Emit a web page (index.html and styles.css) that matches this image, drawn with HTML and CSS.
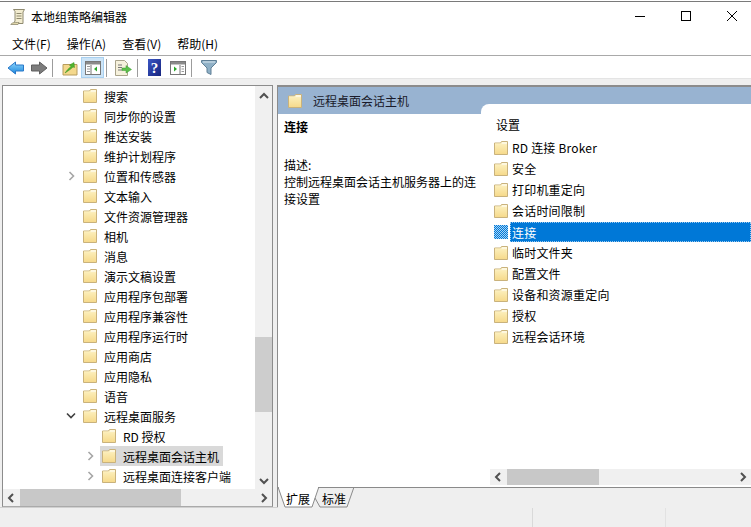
FILE: index.html
```html
<!DOCTYPE html>
<html lang="zh">
<head>
<meta charset="utf-8">
<title>本地组策略编辑器</title>
<link rel="stylesheet" href="styles.css">
</head>
<body>
<svg class="defs" width="0" height="0">
  <defs>
    <linearGradient id="fg" x1="0" y1="0" x2="0" y2="1"><stop offset="0" stop-color="#fdf3c4"/><stop offset="1" stop-color="#f6d98a"/></linearGradient>
    <symbol id="folder" viewBox="0 0 14 14">
      <path d="M.5 2V13.500H13.500V.5H7.500L6.500 2Z" fill="url(#fg)" stroke="#c9b27c"/>
      <path d="M8 1.500H13V3H7.500Z" fill="#fff"/>
      <path d="M1 3H13" stroke="#fbeebd"/>
    </symbol>
    <symbol id="chev-r" viewBox="0 0 8 10"><path d="M1.500 1 5.500 5 1.500 9" fill="none" stroke="#a6a6a6" stroke-width="1.600"/></symbol>
    <symbol id="chev-d" viewBox="0 0 10 8"><path d="M1 1.500 5 5.500 9 1.500" fill="none" stroke="#404040" stroke-width="1.600"/></symbol>
    <symbol id="sb-l" viewBox="0 0 8 10"><path d="M6 1 2 5 6 9" fill="none" stroke="#505050" stroke-width="2"/></symbol>
    <symbol id="sb-r" viewBox="0 0 8 10"><path d="M2 1 6 5 2 9" fill="none" stroke="#505050" stroke-width="2"/></symbol>
    <symbol id="sb-u" viewBox="0 0 10 8"><path d="M1 6 5 2 9 6" fill="none" stroke="#505050" stroke-width="2"/></symbol>
    <symbol id="sb-d" viewBox="0 0 10 8"><path d="M1 2 5 6 9 2" fill="none" stroke="#505050" stroke-width="2"/></symbol>
  </defs>
</svg>
<div class="window">
  <header class="titlebar">
    <svg class="app-icon" width="16" height="18" viewBox="0 0 16 18"><path d="M3.500 1.500H14.500L13 4V15.500H3.500L5 13V3.500Z" fill="#f2ecd0" stroke="#8f8a70"/><path d="M.8 16.500C2 14.500 4 14.500 9 14.500L8 16.500Z" fill="#e6dcae" stroke="#8f8a70" stroke-width=".8"/><path d="M6.500 5.500H11.500M6.500 8H11.500M6.500 10.500H11.500" stroke="#8f8a70"/></svg>
    <span class="title-text">本地组策略编辑器</span>
    <div class="win-btns">
      <svg class="win-btn" width="46" height="28" viewBox="0 0 46 28"><path d="M22 13.500H32" stroke="#000"/></svg>
      <svg class="win-btn" width="46" height="28" viewBox="0 0 46 28"><rect x="22.500" y="8.500" width="9" height="9" fill="none" stroke="#000"/></svg>
      <svg class="win-btn" width="46" height="28" viewBox="0 0 46 28"><path d="M22 8 32 18M32 8 22 18" stroke="#000" fill="none"/></svg>
    </div>
  </header>
  <nav class="menubar">
    <span class="menu">文件(F)</span><span class="menu">操作(A)</span><span class="menu">查看(V)</span><span class="menu">帮助(H)</span>
  </nav>
  <div class="toolbar">
    <button class="tool"><svg width="18" height="16" viewBox="0 0 18 16"><defs><linearGradient id="blue" x1="0" y1="0" x2="0" y2="1"><stop offset="0" stop-color="#8fd6fb"/><stop offset="1" stop-color="#1a86dc"/></linearGradient></defs><path d="M8.500 2 1 8 8.500 14V11H16.500V5H8.500Z" fill="url(#blue)" stroke="#2a78c8"/></svg></button>
    <button class="tool"><svg width="18" height="16" viewBox="0 0 18 16"><path d="M9.500 2 17 8 9.500 14V11H1.500V5H9.500Z" fill="#7d7d7d" stroke="#5f5f5f"/></svg></button>
    <i class="sep"></i>
    <button class="tool tool-up"><svg width="16" height="16" viewBox="0 0 16 16"><path d="M1 4.500H15V15H1Z" fill="#f4d88c" stroke="#b79c5c"/><path d="M3 13C5 10 7 8 9 6.500L7.500 5 12 2.500 12.500 7.500 11 7C9 9 6 11 3 13Z" fill="#4fb52f" stroke="#3a8f22" stroke-width=".5"/></svg></button>
    <button class="tool tool-active"><svg width="16" height="14" viewBox="0 0 16 14"><rect x=".5" y=".5" width="15" height="13" fill="#fff" stroke="#777"/><path d="M1 1H15V3.500H1Z" fill="#8a8a8a"/><path d="M6 4V13" stroke="#777"/><path d="M2 5.500H5M2 8H5M2 10.500H5" stroke="#999"/><path d="M12 5.500V10.500L9 8Z" fill="#29a829"/></svg></button>
    <i class="sep"></i>
    <button class="tool"><svg width="17" height="16" viewBox="0 0 17 16"><path d="M.5.500H9.500L12.500 3.500V15.500H.5Z" fill="#f6f1dc" stroke="#a9a38b"/><path d="M3 5H7M3 7.500H7M3 10H7" stroke="#777"/><path d="M7 8H11V5.500L16.500 9.500 11 13V10.500H7Z" fill="#5cc04a" stroke="#3f9a33" stroke-width=".5"/></svg></button>
    <i class="sep"></i>
    <button class="tool"><svg width="13" height="17" viewBox="0 0 13 17"><defs><linearGradient id="help" x1="0" y1="0" x2="1" y2="1"><stop offset="0" stop-color="#3a56c4"/><stop offset="1" stop-color="#16247e"/></linearGradient></defs><rect width="13" height="17" fill="url(#help)"/><text x="6.500" y="14" class="help-q">?</text></svg></button>
    <button class="tool"><svg width="16" height="14" viewBox="0 0 16 14"><rect x=".5" y=".5" width="15" height="13" fill="#fff" stroke="#777"/><path d="M1 1H15V3.500H1Z" fill="#8a8a8a"/><path d="M10 4V13" stroke="#777"/><path d="M11.500 5.500H14M11.500 8H14M11.500 10.500H14" stroke="#999"/><path d="M4 5.500V10.500L7 8Z" fill="#29a829"/></svg></button>
    <i class="sep"></i>
    <button class="tool"><svg width="16" height="15" viewBox="0 0 16 15"><path d="M.5.500H15.500V2.500L10 8V14.500L6 12.500V8L.5 2.500Z" fill="#8fb0c6" stroke="#5f7f96"/><path d="M2 1.500H14V2.500H2Z" fill="#d8e6ee"/></svg></button>
  </div>
  <div class="band"></div>
  <main class="panes">
    <section class="tree-pane">
      <div class="tree-body">
        <ul class="tree">
          <li class="node l1"><span class="tw"></span><svg class="fi"><use href="#folder"/></svg><span>搜索</span></li>
          <li class="node l1"><span class="tw"></span><svg class="fi"><use href="#folder"/></svg><span>同步你的设置</span></li>
          <li class="node l1"><span class="tw"></span><svg class="fi"><use href="#folder"/></svg><span>推送安装</span></li>
          <li class="node l1"><span class="tw"></span><svg class="fi"><use href="#folder"/></svg><span>维护计划程序</span></li>
          <li class="node l1"><span class="tw"><svg class="ci-r"><use href="#chev-r"/></svg></span><svg class="fi"><use href="#folder"/></svg><span>位置和传感器</span></li>
          <li class="node l1"><span class="tw"></span><svg class="fi"><use href="#folder"/></svg><span>文本输入</span></li>
          <li class="node l1"><span class="tw"></span><svg class="fi"><use href="#folder"/></svg><span>文件资源管理器</span></li>
          <li class="node l1"><span class="tw"></span><svg class="fi"><use href="#folder"/></svg><span>相机</span></li>
          <li class="node l1"><span class="tw"></span><svg class="fi"><use href="#folder"/></svg><span>消息</span></li>
          <li class="node l1"><span class="tw"></span><svg class="fi"><use href="#folder"/></svg><span>演示文稿设置</span></li>
          <li class="node l1"><span class="tw"></span><svg class="fi"><use href="#folder"/></svg><span>应用程序包部署</span></li>
          <li class="node l1"><span class="tw"></span><svg class="fi"><use href="#folder"/></svg><span>应用程序兼容性</span></li>
          <li class="node l1"><span class="tw"></span><svg class="fi"><use href="#folder"/></svg><span>应用程序运行时</span></li>
          <li class="node l1"><span class="tw"></span><svg class="fi"><use href="#folder"/></svg><span>应用商店</span></li>
          <li class="node l1"><span class="tw"></span><svg class="fi"><use href="#folder"/></svg><span>应用隐私</span></li>
          <li class="node l1"><span class="tw"></span><svg class="fi"><use href="#folder"/></svg><span>语音</span></li>
          <li class="node l1"><span class="tw"><svg class="ci-d"><use href="#chev-d"/></svg></span><svg class="fi"><use href="#folder"/></svg><span>远程桌面服务</span></li>
          <li class="node l2"><span class="tw"></span><svg class="fi"><use href="#folder"/></svg><span>RD 授权</span></li>
          <li class="node l2"><span class="tw"><svg class="ci-r"><use href="#chev-r"/></svg></span><span class="sel-wrap"><svg class="fi"><use href="#folder"/></svg><span>远程桌面会话主机</span></span></li>
          <li class="node l2"><span class="tw"><svg class="ci-r"><use href="#chev-r"/></svg></span><svg class="fi"><use href="#folder"/></svg><span>远程桌面连接客户端</span></li>
        </ul>
        <div class="vscroll">
          <svg class="sb-ic"><use href="#sb-u"/></svg>
          <div class="vtrack"><div class="vthumb"></div></div>
          <svg class="sb-ic"><use href="#sb-d"/></svg>
        </div>
      </div>
      <div class="hscroll tree-h">
        <svg class="sb-ich"><use href="#sb-l"/></svg>
        <div class="htrack"><div class="hthumb tree-thumb"></div></div>
        <svg class="sb-ich"><use href="#sb-r"/></svg>
      </div>
    </section>
    <section class="detail-pane">
      <div class="detail-head">
        <svg class="fi head-fi"><use href="#folder"/></svg>
        <span>远程桌面会话主机</span>
        <div class="head-tab"></div>
      </div>
      <div class="detail-body">
        <div class="desc">
          <h2 class="desc-title">连接</h2>
          <p class="desc-label">描述:</p>
          <p class="desc-text">控制远程桌面会话主机服务器上的连接设置</p>
        </div>
        <div class="list-col">
          <div class="list-head">设置</div>
          <ul class="list">
            <li class="item"><svg class="fi"><use href="#folder"/></svg><span class="item-t">RD 连接 Broker</span></li>
            <li class="item"><svg class="fi"><use href="#folder"/></svg><span class="item-t">安全</span></li>
            <li class="item"><svg class="fi"><use href="#folder"/></svg><span class="item-t">打印机重定向</span></li>
            <li class="item"><svg class="fi"><use href="#folder"/></svg><span class="item-t">会话时间限制</span></li>
            <li class="item item-sel"><svg class="fi" viewBox="0 0 14 14"><defs><pattern id="chk" width="2" height="2" patternUnits="userSpaceOnUse"><rect width="2" height="2" fill="#a8d4f5"/><rect width="1" height="1" fill="#0078d7"/><rect x="1" y="1" width="1" height="1" fill="#0078d7"/></pattern></defs><rect width="14" height="14" fill="url(#chk)"/></svg><span class="item-t">连接</span></li>
            <li class="item"><svg class="fi"><use href="#folder"/></svg><span class="item-t">临时文件夹</span></li>
            <li class="item"><svg class="fi"><use href="#folder"/></svg><span class="item-t">配置文件</span></li>
            <li class="item"><svg class="fi"><use href="#folder"/></svg><span class="item-t">设备和资源重定向</span></li>
            <li class="item"><svg class="fi"><use href="#folder"/></svg><span class="item-t">授权</span></li>
            <li class="item"><svg class="fi"><use href="#folder"/></svg><span class="item-t">远程会话环境</span></li>
          </ul>
          <div class="hscroll list-h">
            <svg class="sb-ich"><use href="#sb-l"/></svg>
            <div class="htrack"><div class="hthumb list-thumb"></div></div>
            <svg class="sb-ich"><use href="#sb-r"/></svg>
          </div>
        </div>
      </div>
      <div class="tabs">
        <svg class="tabs-svg" width="90" height="21" viewBox="0 0 90 21">
          <path d="M0 0 7 20H34L40.500 1V0Z" fill="#fff" stroke="#8a8a8a"/>
          <path d="M37 11 42 20H69L76 0" fill="none" stroke="#8a8a8a"/>
          <path d="M1 .5H40" stroke="#fff"/>
        </svg>
        <span class="tab tab-a">扩展</span><span class="tab tab-b">标准</span>
      </div>
    </section>
  </main>
  <footer class="status"><div class="st st1"></div><div class="st st2"></div><div class="st st3"></div></footer>
</div>
</body>
</html>
```
FILE: styles.css
```css
* { box-sizing: border-box; }
html, body { margin: 0; padding: 0; }
body { width: 751px; height: 527px; overflow: hidden; background: #fff; font-family: "Noto Sans CJK SC", "Noto Sans", sans-serif; font-size: 12px; color: #000; }
.defs { display: block; height: 0; }
ul { list-style: none; margin: 0; padding: 0; }
.window { display: flex; flex-direction: column; height: 526px; margin-top: 1px; border-top: 1px solid #7a7a7a; }
.titlebar { display: flex; align-items: center; height: 29px; padding-left: 10px; flex: none; }
.app-icon { flex: none; }
.title-text { margin-left: 5px; font-size: 12px; }
.win-btns { margin-left: auto; display: flex; }
.win-btn { display: block; }
.menubar { display: flex; height: 24px; align-items: center; padding-left: 12px; gap: 16px; flex: none; }
.toolbar { display: flex; align-items: center; flex: none; height: 23px; border-top: 1px solid #a9a9a9; padding: 1px 0 0 4px; }
.tool { border: 1px solid transparent; background: none; padding: 0; width: 23px; height: 21px; display: flex; align-items: center; justify-content: center; flex: none; }
.tool-active { background: #cce4f7; border-color: #a8d0f0; }
.sep { display: block; width: 1px; height: 18px; background: #9c9c9c; margin: 0 5px 0 2px; flex: none; }
.help-q { font-family: "Liberation Serif", serif; font-weight: 700; font-size: 15px; fill: #fff; text-anchor: middle; }
.band { height: 7px; background: #efefef; flex: none; border-top: 1px solid #e4e4e4; }
.panes { display: flex; flex: 1; min-height: 0; background: #efefef; padding-left: 2px; gap: 4px; }
.tree-pane { width: 271px; display: flex; flex-direction: column; border: 1px solid #8c8c8c; border-bottom-color: #aaa; background: #fff; height: 422px; flex: none; }
.tree-body { flex: 1; display: flex; min-height: 0; }
.tree { flex: 1; min-width: 0; overflow: hidden; }
.node { display: flex; align-items: center; height: 20px; white-space: nowrap; }
.l1 { padding-left: 63px; }
.l2 { padding-left: 82px; }
.tw { width: 17px; flex: none; display: flex; align-items: center; }
.ci-r { width: 8px; height: 10px; display: block; margin-left: 2px; }
.ci-d { width: 10px; height: 8px; display: block; margin-left: 0; }
.fi { width: 14px; height: 14px; flex: none; margin-right: 7px; display: block; }
.sel-wrap { display: flex; align-items: center; background: #d9d9d9; height: 20px; padding: 0 4px 0 2px; margin-left: -2px; }
.vscroll { width: 17px; flex: none; background: #f0f0f0; display: flex; flex-direction: column; align-items: center; }
.sb-ic { width: 10px; height: 8px; flex: none; margin: 6px 0 4px; display: block; }
.vtrack { flex: 1; width: 100%; padding-top: 233px; }
.vthumb { height: 75px; background: #cdcdcd; }
.hscroll { display: flex; align-items: center; background: #f0f0f0; flex: none; height: 16px; }
.sb-ich { width: 8px; height: 10px; flex: none; margin: 0 4px; display: block; }
.htrack { flex: 1; height: 100%; }
.hthumb { height: 100%; background: #c8c8c8; }
.tree-h { height: 17px; }
.tree-thumb { width: 161px; margin-left: 1px; }
.detail-pane { flex: 1; min-width: 0; display: flex; flex-direction: column; border-left: 1px solid #8c8c8c; border-top: 2px solid #8c8c8c; height: 423px; background: #fff; }
.detail-head { height: 27px; flex: none; background: #98b3d1; display: flex; align-items: center; padding-left: 10px; position: relative; font-size: 12px; color: #1a1a2a; }
.head-fi { margin-right: 11px; }
.head-tab { position: absolute; left: 203px; right: 0; top: 17px; height: 10px; background: #fff; border-radius: 8px 0 0 0; }
.detail-body { flex: 1; min-height: 0; display: flex; }
.desc { width: 203px; flex: none; padding: 4px 5px 0 6px; line-height: 17px; }
.desc-title { font-size: 12px; margin: 0; font-weight: 700; height: 38px; line-height: 17px; }
.desc-label { margin: 0; }
.desc-text { margin: 0; }
.list-col { flex: 1; min-width: 0; display: flex; flex-direction: column; }
.list-head { height: 23px; flex: none; padding: 2px 0 0 15px; line-height: 17px; }
.list { flex: 1; min-height: 0; padding-left: 13px; }
.item { display: flex; align-items: center; height: 21px; white-space: nowrap; }
.item .fi { margin-right: 2px; }
.item-t { padding-left: 2px; letter-spacing: .2px; flex: 1; height: 100%; display: flex; align-items: center; }
.item-sel .item-t { background: #0078d7; color: #fff; outline: 1px dotted #9cc9ee; outline-offset: -1px; height: 20px; margin-top: 1px; }
.list-h { height: 16px; margin: 0 0 2px 9px; }
.list-thumb { width: 92px; margin-left: 1px; }
.tabs { height: 21px; flex: none; background: #efefef; display: flex; position: relative; padding-left: 8px; font-size: 12px; line-height: 21px; border-top: 1px solid #8a8a8a; }
.tabs-svg { position: absolute; left: 0; top: -1px; }
.tab { position: relative; width: 36px; }
.status { height: 20px; flex: none; background: #efefef; border-top: 1px solid #d0d0d0; display: flex; }
.st { height: 100%; }
.st1 { width: 533px; border-right: 1px solid #d9d9d9; }
.st2 { width: 133px; border-right: 1px solid #e2e2e2; }
.st3 { flex: 1; }
```
